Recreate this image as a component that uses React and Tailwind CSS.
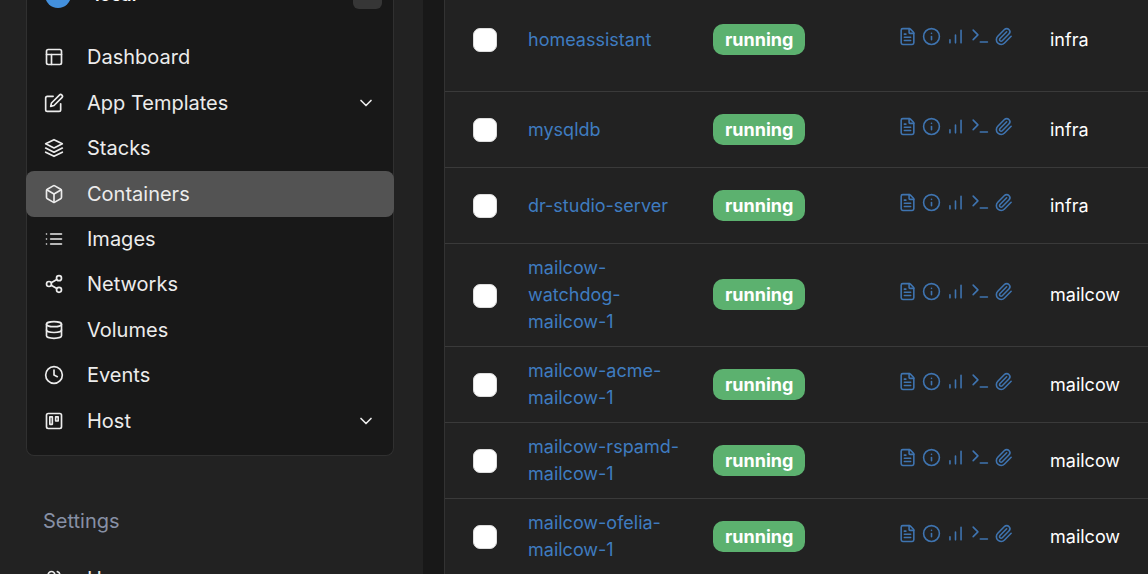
import React from "react";
import clsx from "clsx";
import {
  FiBox,
  FiChevronDown,
  FiClock,
  FiDatabase,
  FiEdit,
  FiLayers,
  FiLayout,
  FiList,
  FiShare2,
  FiTrello,
  FiUsers,
} from "react-icons/fi";
import { ChevronsLeft, FileText, Info, Paperclip } from "lucide-react";

const menu = [
  { label: "Dashboard", icon: FiLayout },
  { label: "App Templates", icon: FiEdit, expandable: true },
  { label: "Stacks", icon: FiLayers },
  { label: "Containers", icon: FiBox, active: true },
  { label: "Images", icon: FiList },
  { label: "Networks", icon: FiShare2 },
  { label: "Volumes", icon: FiDatabase },
  { label: "Events", icon: FiClock },
  { label: "Host", icon: FiTrello, expandable: true },
];

const containers = [
  { name: "homeassistant", stack: "infra", tall: true },
  { name: "mysqldb", stack: "infra" },
  { name: "dr-studio-server", stack: "infra" },
  { name: "mailcow-watchdog-mailcow-1", stack: "mailcow", tall: true },
  { name: "mailcow-acme-mailcow-1", stack: "mailcow" },
  { name: "mailcow-rspamd-mailcow-1", stack: "mailcow" },
  { name: "mailcow-ofelia-mailcow-1", stack: "mailcow" },
];

function StatsIcon() {
  return (
    <svg viewBox="0 0 24 24" className="size-[19px]" fill="none" stroke="currentColor" strokeWidth="2" strokeLinecap="round">
      <path d="M5 20v-4M12 20V10M19 20V4" />
    </svg>
  );
}

function ConsoleIcon() {
  return (
    <svg viewBox="0 0 24 24" className="size-[19px]" fill="none" stroke="currentColor" strokeWidth="2" strokeLinecap="round" strokeLinejoin="round">
      <path d="M4 16l6-6-6-6M13 19h9" />
    </svg>
  );
}

const actions = [
  { label: "Logs", icon: <FileText className="size-[19px]" /> },
  { label: "Inspect", icon: <Info className="size-[19px]" /> },
  { label: "Stats", icon: <StatsIcon /> },
  { label: "Console", icon: <ConsoleIcon /> },
  { label: "Attach", icon: <Paperclip className="size-[19px]" /> },
];

function MenuItem({ label, icon: Icon, active, expandable }) {
  return (
    <li className="flex">
      <a
        href="#"
        className={clsx(
          "flex flex-1 items-center rounded-lg pr-[18px] pb-px pl-[18px] text-[20px] leading-7 text-[#ececec]",
          active && "bg-[#535353]"
        )}
      >
        <Icon className="mr-[23px] size-5" />
        <span className="flex-1">{label}</span>
        {expandable && <FiChevronDown className="size-5" />}
      </a>
    </li>
  );
}

function Sidebar() {
  return (
    <aside className="w-[423px] shrink-0 bg-[#222222] pr-[29px] pl-[26px]">
      <nav className="rounded-b-lg border border-t-0 border-[#303030] bg-[#181818] pb-[11px]">
        <div className="-mt-[21px] mb-[25px] flex h-[31px] items-center pr-[11px] pl-[18px]">
          <span className="mr-6 size-[26px] rounded-full bg-[#4390dd]" />
          <span className="flex-1 text-[18px] font-semibold text-white">local</span>
          <button aria-label="Collapse" className="flex size-[29px] items-center justify-center rounded-md bg-[#363636] text-[#606060]">
            <ChevronsLeft className="size-4" />
          </button>
        </div>
        <ul className="-mx-px grid h-[409px] auto-rows-fr">
          {menu.map((item) => (
            <MenuItem key={item.label} {...item} />
          ))}
        </ul>
      </nav>
      <h2 className="mt-[51px] mb-[22px] pl-[17px] text-[20px] leading-7 text-[#8790a5]">
        Settings
      </h2>
      <ul className="grid h-[45px]">
        <MenuItem label="Users" icon={FiUsers} expandable />
      </ul>
    </aside>
  );
}

function ContainerRow({ name, stack, tall }) {
  return (
    <tr className={clsx("border-b border-[#3a3a3a]", tall ? "h-[103px]" : "h-[76px]")}>
      <td className="w-[83px] pl-7">
        <input
          type="checkbox"
          aria-label={name}
          className="mt-0.5 block size-6 appearance-none rounded-[7px] border border-[#dddddd] bg-white checked:bg-[#3f7fc9]"
        />
      </td>
      <td className="w-[185px] pr-6">
        <a href="#" className="block text-[#3f7cc0]">{name}</a>
      </td>
      <td className="w-[185px]">
        <span className="inline-block rounded-[10px] bg-[#5cb16f] px-3 py-0.5 font-bold text-white">
          running
        </span>
      </td>
      <td className="w-[152px]">
        <div className="-mt-1.5 flex gap-[5px] text-[#3f74b0]">
          {actions.map((action) => (
            <button key={action.label} title={action.label} aria-label={action.label}>
              {action.icon}
            </button>
          ))}
        </div>
      </td>
      <td className="text-white">{stack}</td>
    </tr>
  );
}

export default function App() {
  return (
    <div className="flex h-screen overflow-hidden bg-[#181818] font-['Inter',sans-serif]">
      <Sidebar />
      <main className="ml-[21px] flex-1 border-l border-[#333333] bg-[#222222]">
        <table className="-mt-3 w-full table-fixed border-collapse text-[18px] leading-[27px]">
          <tbody>
            {containers.map((container) => (
              <ContainerRow key={container.name} {...container} />
            ))}
          </tbody>
        </table>
      </main>
    </div>
  );
}
